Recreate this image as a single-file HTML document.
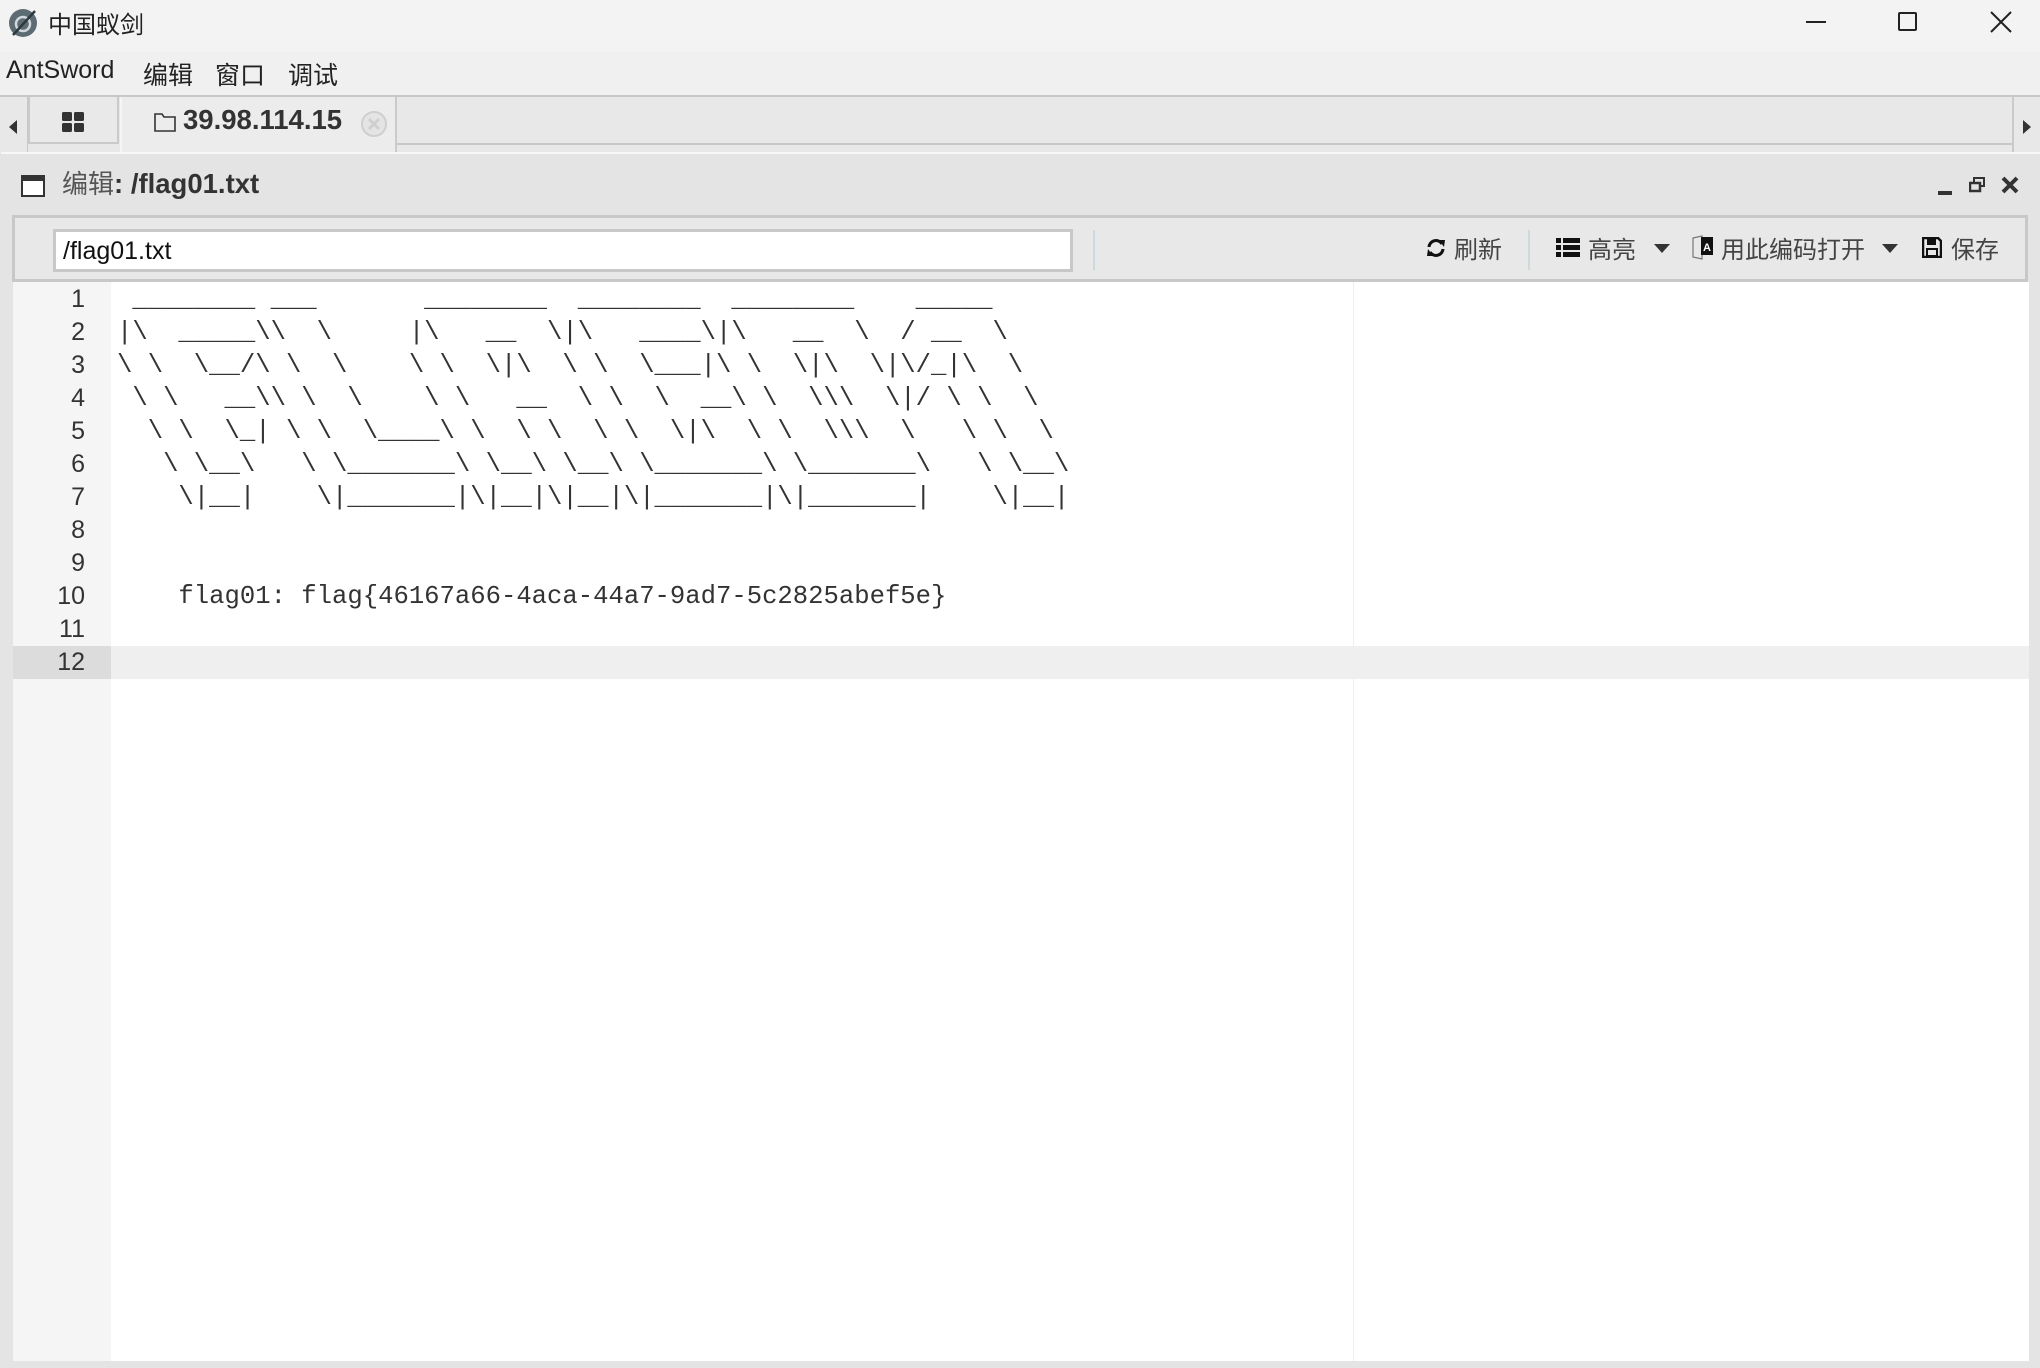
<!DOCTYPE html>
<html><head><meta charset="utf-8"><style>
*{margin:0;padding:0;box-sizing:border-box}
body{width:2040px;height:1368px;position:relative;overflow:hidden;background:#e4e4e4;font-family:"Liberation Sans","Noto Sans CJK SC",sans-serif;color:#222}
.abs{position:absolute}
#title{left:0;top:0;width:2040px;height:52px;background:#f3f3f3}
#menu{left:0;top:52px;width:2040px;height:44px;background:#f0f0f0;font-size:25px}
#menu span{position:absolute;top:4px}
#tabs{left:0;top:95px;width:2040px;height:58px;background:#e8e8e8;border-top:2px solid #c8c8c8}
#panel{left:1px;top:152px;width:2039px;height:1216px;background:#e4e4e4;border-top:2px solid #f7f7f7}
#tb{left:12px;top:215px;width:2016px;height:67px;background:#e8e8e8;border:3px solid #c8c8c8}
#inp{left:53px;top:229px;width:1020px;height:43px;background:#fff;border:3px solid #c8c8c8;font-size:25px;padding:5px 0 0 7px;color:#111}
#ed{left:13px;top:282px;width:2016px;height:1079px;background:#fff}
#gut{left:13px;top:282px;width:98px;height:1079px;background:#f5f5f5}
.ln{position:absolute;left:13px;width:72px;text-align:right;font-family:"Liberation Sans",sans-serif;font-size:25px;color:#333;height:33px;line-height:33px}
pre{position:absolute;left:117px;top:283px;font-family:"Liberation Mono",monospace;font-size:25.6px;line-height:33px;color:#333}
.tbt{position:absolute;top:230px;font-size:24px;color:#444}
</style></head><body>
<div id="title" class="abs">
 <svg class="abs" style="left:7px;top:7px" width="32" height="32" viewBox="0 0 32 32"><circle cx="16" cy="16" r="14" fill="#5d6b73"/><circle cx="16" cy="17" r="7" fill="none" stroke="#cfd8dc" stroke-width="2.5"/><path d="M6 28L28 4" stroke="#2d3940" stroke-width="2.5"/></svg>
 <div class="abs" style="left:48px;top:5px;font-size:24px">中国蚁剑</div>
 <div class="abs" style="left:1806px;top:21px;width:20px;height:2px;background:#222"></div>
 <div class="abs" style="left:1898px;top:12px;width:19px;height:19px;border:2px solid #222;border-radius:2px"></div>
 <svg class="abs" style="left:1990px;top:11px" width="22" height="22"><path d="M1 1L21 21M21 1L1 21" stroke="#222" stroke-width="2"/></svg>
</div>
<div id="menu" class="abs"><span style="left:6px">AntSword</span><span style="left:143px">编辑</span><span style="left:215px">窗口</span><span style="left:288px">调试</span></div>
<div id="tabs" class="abs">
 <svg class="abs" style="left:8px;top:22px" width="10" height="16"><path d="M9 1L1 8L9 15Z" fill="#333"/></svg>
 <div class="abs" style="left:27px;top:0;width:1px;height:56px;background:#c8c8c8"></div>
 <div class="abs" style="left:28px;top:0;width:91px;height:47px;background:#e9e9e9;border:2px solid #cacaca;border-top:none"></div>
 <svg class="abs" style="left:62px;top:15px" width="23" height="21"><rect x="0" y="0" width="10" height="9" rx="1.5" fill="#333"/><rect x="12" y="0" width="10" height="9" rx="1.5" fill="#333"/><rect x="0" y="11" width="10" height="9" rx="1.5" fill="#333"/><rect x="12" y="11" width="10" height="9" rx="1.5" fill="#333"/></svg>
 <div class="abs" style="left:120px;top:0;width:277px;height:56px;background:#ececec;border-right:2px solid #cacaca;border-left:2px solid #f5f5f5"></div>
 <svg class="abs" style="left:154px;top:15px" width="22" height="20"><path d="M1 2H8L10 5H21V19H1Z" fill="none" stroke="#333" stroke-width="1.6"/></svg>
 <div class="abs" style="left:183px;top:7px;font-size:27.5px;font-weight:bold;color:#333">39.98.114.15</div>
 <svg class="abs" style="left:360px;top:13px" width="28" height="28"><circle cx="14" cy="14" r="12" fill="#e4e4e4" stroke="#cfcfcf" stroke-width="2"/><path d="M9 9L19 19M19 9L9 19" stroke="#cfcfcf" stroke-width="3"/></svg>
 <div class="abs" style="left:397px;top:46px;width:1615px;height:2px;background:#c8c8c8"></div>
 <div class="abs" style="left:2012px;top:0;width:2px;height:56px;background:#cacaca"></div>
 <svg class="abs" style="left:2022px;top:22px" width="10" height="16"><path d="M1 1L9 8L1 15Z" fill="#333"/></svg>
</div>
<div id="panel" class="abs"></div>
<svg class="abs" style="left:21px;top:175px" width="24" height="22"><rect x="1" y="1" width="22" height="20" fill="#fff" stroke="#333" stroke-width="2"/><rect x="1" y="1" width="22" height="5" fill="#333"/></svg>
<div class="abs" style="left:62px;top:164px;font-size:26px;color:#555">编辑<b style="color:#333;font-size:27.5px">: /flag01.txt</b></div>
<div class="abs" style="left:1938px;top:191px;width:14px;height:4px;background:#333"></div>
<svg class="abs" style="left:1969px;top:177px" width="16" height="16"><rect x="5" y="1" width="10" height="8" fill="none" stroke="#333" stroke-width="2"/><rect x="1" y="6" width="10" height="8" fill="#e4e4e4" stroke="#333" stroke-width="2.5"/></svg>
<svg class="abs" style="left:2001px;top:176px" width="18" height="18"><path d="M2 2L16 16M16 2L2 16" stroke="#333" stroke-width="4"/></svg>
<div id="tb" class="abs"></div>
<div id="inp" class="abs">/flag01.txt</div>
<div class="abs" style="left:1093px;top:230px;width:2px;height:40px;background:#cfd8dc"></div>
<div class="abs" style="left:1528px;top:230px;width:2px;height:40px;background:#cfd8dc"></div>
<svg class="abs" style="left:1426px;top:238px" width="20" height="20" viewBox="0 0 20 20"><path d="M3 9A7 7 0 0 1 16 6M17 11A7 7 0 0 1 4 14" fill="none" stroke="#111" stroke-width="3"/><path d="M13 2L19 2L18 9Z" fill="#111"/><path d="M7 18L1 18L2 11Z" fill="#111"/></svg>
<div class="tbt" style="left:1454px">刷新</div>
<svg class="abs" style="left:1556px;top:238px" width="24" height="19"><rect x="0" y="0" width="5" height="5" fill="#111"/><rect x="7" y="0" width="17" height="5" fill="#111"/><rect x="0" y="7" width="5" height="5" fill="#111"/><rect x="7" y="7" width="17" height="5" fill="#111"/><rect x="0" y="14" width="5" height="5" fill="#111"/><rect x="7" y="14" width="17" height="5" fill="#111"/></svg>
<div class="tbt" style="left:1588px">高亮</div>
<svg class="abs" style="left:1654px;top:244px" width="16" height="9"><path d="M0 0H16L8 9Z" fill="#333"/></svg>
<svg class="abs" style="left:1692px;top:235px" width="22" height="26"><path d="M1 3L10 1V24L1 22Z" fill="none" stroke="#777" stroke-width="1.2"/><rect x="9" y="2" width="12" height="18" fill="#111"/><text x="11" y="16" font-size="11" fill="#fff" font-family="Liberation Sans" font-weight="bold">A</text></svg>
<div class="tbt" style="left:1721px">用此编码打开</div>
<svg class="abs" style="left:1882px;top:244px" width="16" height="9"><path d="M0 0H16L8 9Z" fill="#333"/></svg>
<svg class="abs" style="left:1922px;top:237px" width="20" height="21"><path d="M1 1H16L19 4V20H1Z" fill="none" stroke="#111" stroke-width="2.5"/><rect x="5" y="2" width="9" height="6" fill="#111"/><rect x="5" y="12" width="10" height="7" fill="none" stroke="#111" stroke-width="2"/></svg>
<div class="tbt" style="left:1951px">保存</div>
<div id="ed" class="abs"></div>
<div id="gut" class="abs"></div>
<div class="abs" style="left:111px;top:646px;width:1918px;height:33px;background:#efefef"></div>
<div class="abs" style="left:13px;top:646px;width:98px;height:33px;background:#dcdcdc"></div>
<div class="abs" style="left:1353px;top:282px;width:1px;height:364px;background:#eee"></div>
<div class="abs" style="left:1353px;top:679px;width:1px;height:682px;background:#eee"></div>
<div class="ln" style="top:283px">1</div><div class="ln" style="top:316px">2</div><div class="ln" style="top:349px">3</div><div class="ln" style="top:382px">4</div><div class="ln" style="top:415px">5</div><div class="ln" style="top:448px">6</div><div class="ln" style="top:481px">7</div><div class="ln" style="top:514px">8</div><div class="ln" style="top:547px">9</div><div class="ln" style="top:580px">10</div><div class="ln" style="top:613px">11</div><div class="ln" style="top:646px">12</div>
<pre> ________ ___       ________  ________  ________    _____
|\  _____\\  \     |\   __  \|\   ____\|\   __  \  / __  \
\ \  \__/\ \  \    \ \  \|\  \ \  \___|\ \  \|\  \|\/_|\  \
 \ \   __\\ \  \    \ \   __  \ \  \  __\ \  \\\  \|/ \ \  \
  \ \  \_| \ \  \____\ \  \ \  \ \  \|\  \ \  \\\  \   \ \  \
   \ \__\   \ \_______\ \__\ \__\ \_______\ \_______\   \ \__\
    \|__|    \|_______|\|__|\|__|\|_______|\|_______|    \|__|


    flag01: flag{46167a66-4aca-44a7-9ad7-5c2825abef5e}

</pre>
</body></html>
